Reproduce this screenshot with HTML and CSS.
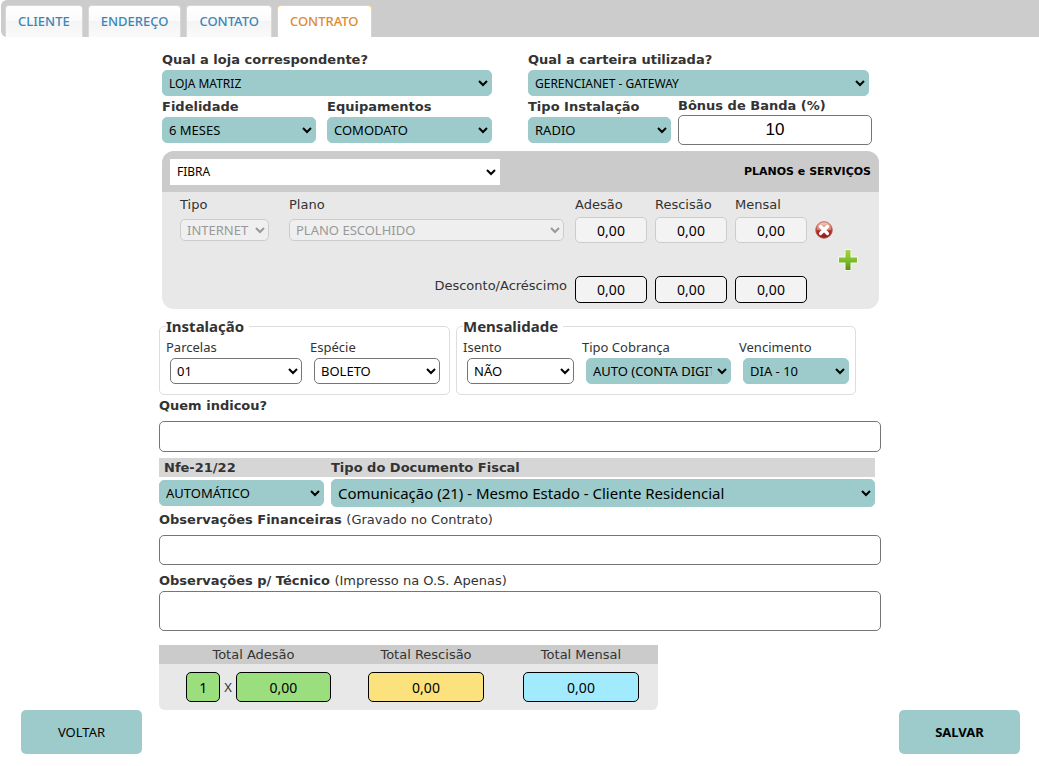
FILE: index.html
```html
<!DOCTYPE html>
<html lang="pt-BR">
<head>
<meta charset="utf-8">
<meta name="viewport" content="width=device-width, initial-scale=1">
<title>Contrato</title>
<link rel="stylesheet" href="styles.css">
</head>
<body>
<nav class="tabs">
  <a class="tab" href="#cliente">CLIENTE</a>
  <a class="tab" href="#endereco">ENDEREÇO</a>
  <a class="tab" href="#contato">CONTATO</a>
  <a class="tab tab-active" href="#contrato" aria-current="page">CONTRATO</a>
</nav>
<form class="page">
  <main class="main">
    <div class="top">
      <div class="top-group top-left">
        <div class="field field-full">
          <label class="label" for="loja">Qual a loja correspondente?</label>
          <select class="select small" id="loja"><option>LOJA MATRIZ</option></select>
        </div>
        <div class="field">
          <label class="label" for="fidelidade">Fidelidade</label>
          <select class="select" id="fidelidade"><option>6 MESES</option></select>
        </div>
        <div class="field">
          <label class="label" for="equip">Equipamentos</label>
          <select class="select" id="equip"><option>COMODATO</option></select>
        </div>
      </div>
      <div class="top-group top-right">
        <div class="field field-full wallet">
          <label class="label" for="carteira">Qual a carteira utilizada?</label>
          <select class="select small" id="carteira"><option>GERENCIANET - GATEWAY</option></select>
        </div>
        <div class="field">
          <label class="label" for="tipo-inst">Tipo Instalação</label>
          <select class="select" id="tipo-inst"><option>RADIO</option></select>
        </div>
        <div class="field bonus">
          <label class="label" for="bonus">Bônus de Banda (%)</label>
          <input class="input bonus-input" id="bonus" type="text" value="10">
        </div>
      </div>
    </div>

    <section class="panel">
      <header class="panel-head">
        <select class="select plain" aria-label="Tecnologia"><option>FIBRA</option></select>
        <h2 class="panel-title">PLANOS e SERVIÇOS</h2>
      </header>
      <div class="plans">
        <label class="caption" for="tipo">Tipo</label>
        <label class="caption" for="plano">Plano</label>
        <label class="caption" for="adesao">Adesão</label>
        <label class="caption" for="rescisao">Rescisão</label>
        <label class="caption" for="mensal">Mensal</label>
        <span></span>
        <select class="select off off-type" id="tipo" disabled><option>INTERNET</option></select>
        <select class="select off off-plan" id="plano" disabled><option>PLANO ESCOLHIDO</option></select>
        <input class="money soft" id="adesao" type="text" value="0,00">
        <input class="money soft" id="rescisao" type="text" value="0,00">
        <input class="money soft" id="mensal" type="text" value="0,00">
        <button class="icon-btn" type="button" aria-label="Remover plano">
          <svg width="18" height="18" viewBox="0 0 18 18">
            <defs>
              <linearGradient id="red" x1="0" y1="0" x2="0" y2="1"><stop offset="0" stop-color="#f3b9a6"/><stop offset=".4" stop-color="#d2604f"/><stop offset=".6" stop-color="#a92b26"/><stop offset="1" stop-color="#8c1c1c"/></linearGradient>
            </defs>
            <circle cx="9" cy="9" r="8.3" fill="url(#red)" stroke="#b5564c" stroke-width=".8"/>
            <path d="M2 8.500a7 7 0 0 1 14 0C12 10 6 10 2 8.500z" fill="#fff" opacity=".3"/>
            <path d="M5.500 5.500l7 7M12.500 5.500l-7 7" stroke="#fff" stroke-width="3.200" stroke-linecap="round"/>
          </svg>
        </button>
        <button class="icon-btn add" type="button" aria-label="Adicionar plano">
          <svg width="20" height="22" viewBox="0 0 20 22">
            <defs>
              <linearGradient id="green" x1="0" y1="0" x2="0" y2="1"><stop offset="0" stop-color="#a5d442"/><stop offset=".5" stop-color="#7fc02c"/><stop offset="1" stop-color="#568f1c"/></linearGradient>
            </defs>
            <path d="M7.500 1h5v7.500H19v5h-6.500V21h-5v-7.500H1v-5h6.500z" fill="url(#green)" stroke="#f4f9e8" stroke-width="2" stroke-linejoin="round" paint-order="stroke"/>
          </svg>
        </button>
        <span class="caption adjust">Desconto/Acréscimo</span>
        <input class="money" type="text" value="0,00" aria-label="Desconto adesão">
        <input class="money" type="text" value="0,00" aria-label="Desconto rescisão">
        <input class="money" type="text" value="0,00" aria-label="Desconto mensal">
      </div>
    </section>

    <div class="billing">
      <fieldset class="box">
        <legend class="legend">Instalação</legend>
        <div class="box-grid install-grid">
          <div class="field"><label class="sublabel" for="parcelas">Parcelas</label>
            <select class="select line" id="parcelas"><option>01</option></select></div>
          <div class="field"><label class="sublabel" for="especie">Espécie</label>
            <select class="select line" id="especie"><option>BOLETO</option></select></div>
        </div>
      </fieldset>
      <fieldset class="box">
        <legend class="legend">Mensalidade</legend>
        <div class="box-grid month-grid">
          <div class="field"><label class="sublabel" for="isento">Isento</label>
            <select class="select line" id="isento"><option>NÃO</option></select></div>
          <div class="field"><label class="sublabel" for="cobranca">Tipo Cobrança</label>
            <select class="select" id="cobranca"><option>AUTO (CONTA DIGITAL)</option></select></div>
          <div class="field"><label class="sublabel" for="venc">Vencimento</label>
            <select class="select" id="venc"><option>DIA - 10</option></select></div>
        </div>
      </fieldset>
    </div>

    <label class="label" for="indicou">Quem indicou?</label>
    <input class="input referrer" id="indicou" type="text">

    <div class="fiscal">
      <div class="fiscal-head">
        <label class="label" for="nfe">Nfe-21/22</label>
        <label class="label" for="doc">Tipo do Documento Fiscal</label>
      </div>
      <div class="fiscal-row">
        <select class="select" id="nfe"><option>AUTOMÁTICO</option></select>
        <select class="select doc" id="doc"><option>Comunicação (21) - Mesmo Estado - Cliente Residencial</option></select>
      </div>
    </div>

    <label class="label" for="obs-fin">Observações Financeiras <span class="hint">(Gravado no Contrato)</span></label>
    <input class="input notes" id="obs-fin" type="text">
    <label class="label" for="obs-tec">Observações p/ Técnico <span class="hint">(Impresso na O.S. Apenas)</span></label>
    <textarea class="input area" id="obs-tec"></textarea>

    <section class="totals">
      <div class="totals-head">
        <span>Total Adesão</span><span>Total Rescisão</span><span>Total Mensal</span>
      </div>
      <div class="totals-body">
        <div class="total-cell total-first">
          <input class="total green times" type="text" value="1" aria-label="Vezes">
          <span class="by">X</span>
          <input class="total green amount" type="text" value="0,00" aria-label="Total Adesão">
        </div>
        <div class="total-cell"><input class="total yellow" type="text" value="0,00" aria-label="Total Rescisão"></div>
        <div class="total-cell"><input class="total blue" type="text" value="0,00" aria-label="Total Mensal"></div>
      </div>
    </section>
  </main>
  <footer class="actions">
    <button class="button" type="button">VOLTAR</button>
    <button class="button strong" type="submit">SALVAR</button>
  </footer>
</form>
</body>
</html>
```
FILE: styles.css
```css
* { box-sizing: border-box; }

body {
  margin: 0;
  background: #fff;
  color: #333;
  font-family: "DejaVu Sans", Verdana, sans-serif;
  font-size: 13px;
}

input, select, textarea, button {
  margin: 0;
  font-family: "Noto Sans", "Trebuchet MS", sans-serif;
  font-size: 13px;
  color: #000;
}

/* Tabs */
.tabs {
  display: flex;
  align-items: flex-end;
  gap: 5px;
  height: 37px;
  margin-left: 1px;
  padding-left: 4px;
  background: #ccc;
  border-radius: 6px 0 0 6px;
}
.tab {
  height: 32px;
  padding: 0 12px;
  border: 1px solid #d8d8d8;
  border-bottom: 0;
  border-radius: 4px 4px 0 0;
  background: linear-gradient(#fff 0, #fafafa 50%, #f4f4f4 50%, #fafafa 100%);
  font-family: "Noto Sans", "Trebuchet MS", sans-serif;
  font-size: 13px;
  line-height: 30px;
  font-weight: 500;
  color: #3a87b7;
  text-decoration: none;
}
.tab-active {
  background: #fff;
  border-color: #fbd850;
  color: #df8a2e;
}

/* Form column */
.main {
  width: 100%;
  max-width: 723px;
  margin: 0 auto;
  padding: 12px 0 0 1px;
}
.field { display: flex; flex-direction: column; min-width: 0; }
.label {
  display: block;
  font-size: 13px;
  font-weight: bold;
  line-height: 21px;
}
.hint { font-weight: normal; }

.select {
  width: 100%;
  min-width: 0;
  height: 26px;
  padding: 0 2px;
  border: 1px solid #9dcbcb;
  border-radius: 5px;
  background-color: #9dcbcb;
}
.small { font-size: 12px; }
.plain {
  width: 330px;
  border-color: #fff;
  border-radius: 0;
  background-color: #fff;
  font-size: 12px;
}
.line { border-color: #767676; background-color: #fff; }

.input {
  display: block;
  width: 100%;
  border: 1px solid #767676;
  border-radius: 5px;
  background: #fff;
}

.top { display: flex; align-items: flex-start; gap: 36px; padding: 0 9px 0 3px; }
.top-group { display: grid; }
.top-left { flex: 330; grid-template-columns: 154fr 165fr; column-gap: 11px; }
.top-right { flex: 344; grid-template-columns: 143fr 194fr; column-gap: 7px; }
.field-full { grid-column: 1 / -1; }
.wallet { padding-right: 3px; }
.bonus .label { line-height: 19px; }
.bonus-input { height: 30px; font-family: "Liberation Sans", Arial, sans-serif; font-size: 17px; text-align: center; }

/* Plans panel */
.panel {
  margin: 6px 2px 0 3px;
  border-radius: 12px;
  overflow: hidden;
  background: #e8e8e8;
}
.panel-head {
  display: flex;
  align-items: center;
  justify-content: space-between;
  height: 41px;
  padding: 0 8px;
  background: #cbcbcb;
}
.panel-title { margin: 0; font-size: 11px; color: #000; }
.plans {
  display: grid;
  grid-template-columns: 101fr 278fr 72px 72px 72px 43px;
  grid-template-rows: 19px 26px 27px 27px;
  column-gap: 8px;
  row-gap: 3px;
  align-items: center;
  padding: 3px 21px 6px 18px;
}
.caption { line-height: 20px; }
.off { height: 22px; border-color: #ccc; background-color: #efefef; color: #999; opacity: 1; }
.off-type { width: 89px; }
.off-plan { width: 275px; }
.money {
  width: 100%;
  height: 27px;
  border: 1px solid #000;
  border-radius: 5px;
  background: #f3f3f3;
  font-size: 14px;
  text-align: center;
}
.soft { height: 26px; border-color: #ccc; }
.icon-btn { display: flex; width: 18px; padding: 0; border: 0; background: none; }
.add { grid-column: 6; justify-self: end; width: 20px; }
.adjust { grid-column: 1 / 3; justify-self: end; align-self: start; }

/* Billing boxes */
.billing {
  display: grid;
  grid-template-columns: 291fr 400fr;
  gap: 6px;
  margin-top: 7px;
  padding-right: 25px;
}
.box {
  min-width: 0;
  margin: 0;
  padding: 0 6px 10px;
  border: 1px solid #ddd;
  border-radius: 5px;
}
.legend { padding: 0 5px 0 0; font-family: "Noto Sans", "Trebuchet MS", sans-serif; font-size: 15px; line-height: 20px; font-weight: bold; }
.box-grid { display: grid; column-gap: 8px; }
.install-grid { grid-template-columns: 136fr 130fr; padding-right: 3px; }
.month-grid { grid-template-columns: 111fr 149fr 110fr; }
.sublabel { font-family: "Noto Sans", "Trebuchet MS", sans-serif; font-size: 13px; line-height: 22px; }
.box .select { width: auto; margin-left: 4px; }

.referrer { height: 31px; margin-top: 5px; }

/* Fiscal document */
.fiscal { margin: 6px 6px 0 0; }
.fiscal-head, .fiscal-row { display: grid; grid-template-columns: 165fr 544fr; column-gap: 7px; align-items: center; }
.fiscal-head { background: #d6d6d6; }
.fiscal-head .label { line-height: 19px; }
.fiscal-head .label:first-child { padding-left: 5px; }
.fiscal-row { padding: 2px 0; }
.doc { height: 28px; font-size: 15px; }

.notes { height: 30px; margin: 5px 0; }
.area { height: 40px; resize: none; }

/* Totals */
.totals {
  max-width: 499px;
  margin-top: 14px;
  border-radius: 0 0 6px 6px;
  overflow: hidden;
  background: #e8e8e8;
}
.totals-head, .totals-body { display: grid; grid-template-columns: 189fr 156fr 154fr; }
.totals-head { background: #cbcbcb; text-align: center; line-height: 19px; }
.totals-body { padding: 8px 0; }
.total-cell { display: flex; align-items: center; justify-content: center; gap: 4px; }
.total-first { padding-left: 10px; }
.total {
  width: 116px;
  height: 30px;
  border: 1px solid #000;
  border-radius: 5px;
  font-size: 14px;
  text-align: center;
}
.times { width: 34px; }
.amount { width: 95px; }
.by { font-family: "Noto Sans", "Trebuchet MS", sans-serif; }
.green { background: #9bde7e; }
.yellow { background: #fce27c; }
.blue { background: #a2ebff; }

.actions { display: flex; justify-content: space-between; padding: 0 19px 13px 21px; }
.button {
  width: 121px;
  height: 44px;
  border: 0;
  border-radius: 5px;
  background: #9dcbcb;
}
.strong { font-weight: bold; }
```
